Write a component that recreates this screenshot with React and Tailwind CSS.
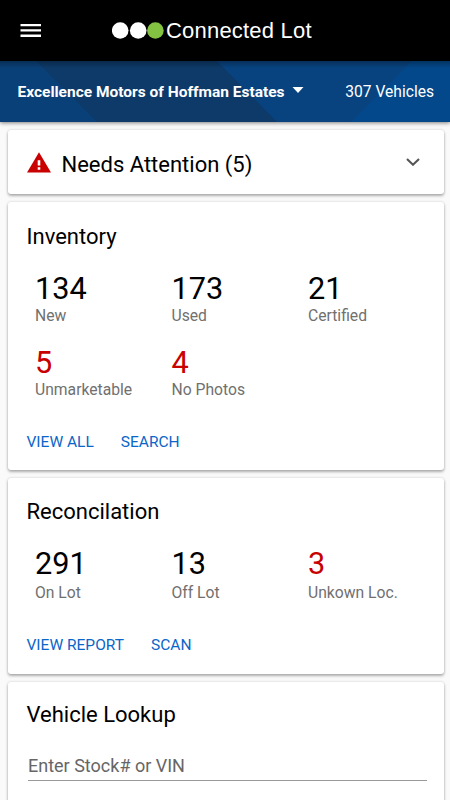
const Stat = ({ value, label, alert, labelClass = 'mt-px' }) => (
  <div className="h-[74.5px]">
    <p className={`text-[30.700px] leading-8 ${alert ? 'text-[#c80000]' : 'text-black'}`}>{value}</p>
    <p className={`text-[15.700px] leading-5 whitespace-nowrap text-[#707070] ${labelClass}`}>{label}</p>
  </div>
);

const Card = ({ className = '', children }) => (
  <section className={`rounded-[3px] bg-white pl-[18.500px] pr-[19px] shadow-[0_2px_3px_rgba(0,0,0,0.28),0_0_3px_rgba(0,0,0,0.16)] ${className}`}>
    {children}
  </section>
);

const CardTitle = ({ children }) => (
  <h2 className="text-[22px] leading-7 text-black">{children}</h2>
);

const Actions = ({ items, className = '' }) => (
  <div className={`flex text-[15.500px] leading-5 text-[#0a66c8] ${className}`}>
    {items.map((item) => (
      <button key={item} className="whitespace-nowrap">{item}</button>
    ))}
  </div>
);

const inventory = [
  { value: 134, label: 'New' },
  { value: 173, label: 'Used' },
  { value: 21, label: 'Certified' },
  { value: 5, label: 'Unmarketable', alert: true },
  { value: 4, label: 'No Photos', alert: true },
];

const reconciliation = [
  { value: 291, label: 'On Lot' },
  { value: 13, label: 'Off Lot' },
  { value: 3, label: 'Unkown Loc.', alert: true },
];

const App = () => {
  return (
    <div className="h-[800px] w-[450px] overflow-hidden bg-[#fafafa] font-[Roboto,sans-serif]">
      <header className="flex h-[61px] items-center bg-black pl-5">
        <svg className="h-[15px] w-[22px]" viewBox="0 0 22 15" fill="#fff">
          <path d="M.5 1h20.500v2.300H.5zM.5 6.300h20.500v2.300H.5zM.5 11.600h20.500v2.300H.5z" />
        </svg>
        <div className="ml-[70px] flex items-center">
          <svg className="h-[18px] w-[52px]" viewBox="0 0 52 18">
            <circle cx="8.200" cy="8.500" r="8.300" fill="#fff" />
            <circle cx="26.200" cy="8.500" r="8.300" fill="#fff" />
            <circle cx="43.400" cy="8.500" r="8.300" fill="#83c341" />
          </svg>
          <span className="ml-[2px] font-['Liberation_Sans',sans-serif] text-[22px] leading-7 tracking-[0.2px] whitespace-nowrap text-white">Connected Lot</span>
        </div>
      </header>

      <div className="relative flex h-[61px] items-center bg-[#084380] pl-[17.500px] pr-4 text-white shadow-[0_1px_4px_rgba(0,0,0,0.5)]">
        <svg className="absolute inset-0 h-full w-full" viewBox="0 0 450 61" preserveAspectRatio="none">
          <defs>
            <linearGradient id="edge" x1="0" y1="0" x2="0" y2="1">
              <stop offset="0" stopColor="#000" stopOpacity="0.3" />
              <stop offset="1" stopColor="#000" stopOpacity="0" />
            </linearGradient>
          </defs>
          <path d="M0 0h36l61 61H0z" fill="#0a4078" />
          <path d="M36 0h181l60 61H97z" fill="#0d3a69" />
          <path d="M412 0h38v61H351z" fill="#03488b" />
          <path d="M0 0h450v7H0z" fill="url(#edge)" />
        </svg>
        <span className="relative pt-0.5 text-[15.500px] font-bold whitespace-nowrap">Excellence Motors of Hoffman Estates</span>
        <svg className="relative ml-[7px] mb-1 h-[6px] w-3" viewBox="0 0 12 6" fill="#fff">
          <path d="M.5 0h11L6 6z" />
        </svg>
        <span className="relative ml-auto pt-0.5 text-[15.600px] whitespace-nowrap">307 Vehicles</span>
      </div>

      <main className="flex flex-col gap-2 pt-2 pl-2 pr-[6px]">
        <Card className="flex h-16 shrink-0 items-center">
          <svg className="ml-[0.500px] h-[21px] w-6" viewBox="0 0 24 21">
            <path d="M12 .3l12 20.200H0z" fill="#c80000" />
            <path d="M10.700 8.200h2.600v5.300h-2.600zM10.700 15.200h2.600v2.500h-2.600z" fill="#fff" />
          </svg>
          <div className="ml-[10.500px] pt-[5px]">
            <CardTitle>Needs Attention (5)</CardTitle>
          </div>
          <svg className="mr-[5px] ml-auto h-2 w-[14px]" viewBox="0 0 14 8" fill="none" stroke="#555" strokeWidth="2.100">
            <path d="M1 1l6 5.700L13 1" />
          </svg>
        </Card>

        <Card className="h-[268px] shrink-0 pt-[21px]">
          <CardTitle>Inventory</CardTitle>
          <div className="mt-[21.500px] grid grid-cols-[136.500px_136.500px_1fr] pl-[8.500px]">
            {inventory.map((stat) => (
              <Stat key={stat.label} {...stat} />
            ))}
          </div>
          <Actions items={['VIEW ALL', 'SEARCH']} className="mt-[10.500px] gap-[27px]" />
        </Card>

        <Card className="h-[195.500px] shrink-0 pt-[19.500px]">
          <CardTitle>Reconcilation</CardTitle>
          <div className="mt-[22.500px] grid grid-cols-[136.500px_136.500px_1fr] pl-[8.500px]">
            {reconciliation.map((stat) => (
              <Stat key={stat.label} {...stat} labelClass="mt-[2.500px]" />
            ))}
          </div>
          <Actions items={['VIEW REPORT', 'SCAN']} className="mt-3 gap-[27px]" />
        </Card>

        <Card className="h-[140px] shrink-0 pt-[19.500px]">
          <CardTitle>Vehicle Lookup</CardTitle>
          <input
            type="text"
            placeholder="Enter Stock# or VIN"
            className="mt-[21px] ml-[1.500px] block h-[31px] w-full border-b border-[#999] text-[18px] outline-none placeholder:text-[#666]"
          />
        </Card>
      </main>
    </div>
  );
};

export default App;
